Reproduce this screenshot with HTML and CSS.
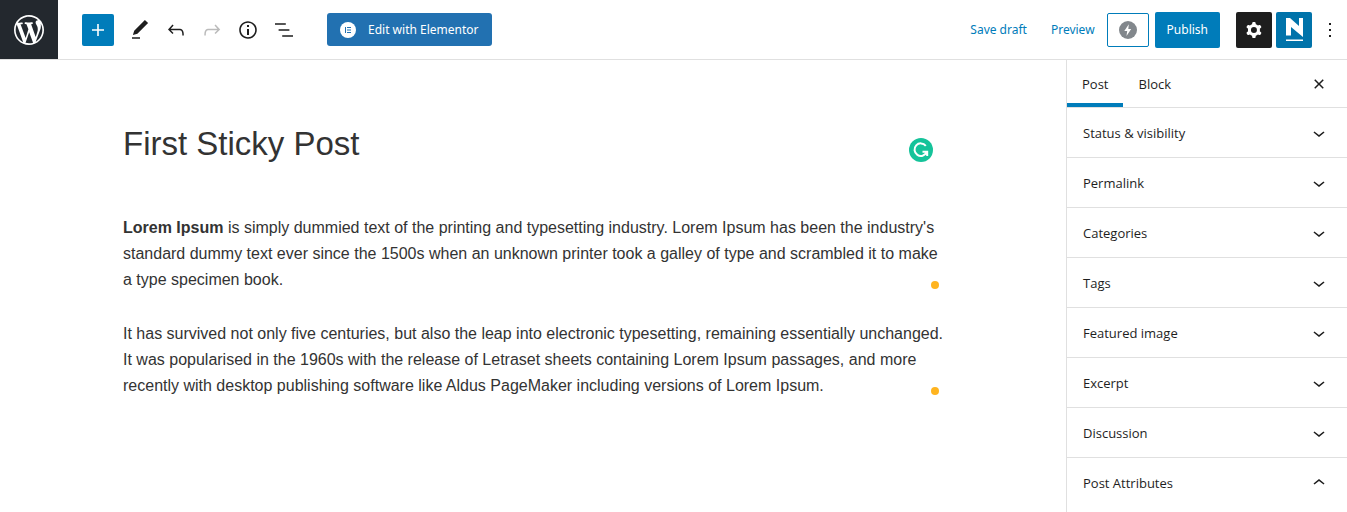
FILE: index.html
```html
<!DOCTYPE html>
<html lang="en">

<head>
    <meta charset="UTF-8">
    <meta name="viewport" content="width=device-width, initial-scale=1.0">
    <title>Edit Post</title>
    <link rel="stylesheet" href="styles.css">
</head>

<body>
    <div class="editor">
        <header class="header">
            <a class="logo" href="#" aria-label="View Posts">
                <svg viewBox="-2 -2 24 24" width="36" height="36"><path d="M20 10c0-5.51-4.49-10-10-10C4.48 0 0 4.49 0 10c0 5.52 4.48 10 10 10 5.51 0 10-4.48 10-10zM7.78 15.37L4.37 6.22c.55-.02 1.17-.08 1.17-.08.5-.06.44-1.13-.06-1.11 0 0-1.45.11-2.37.11-.18 0-.37 0-.58-.01C4.12 2.69 6.87 1.11 10 1.11c2.33 0 4.45.87 6.05 2.34-.68-.11-1.65.39-1.65 1.58 0 .74.45 1.36.9 2.1.35.61.55 1.36.55 2.46 0 1.49-1.4 5-1.4 5l-3.03-8.37c.54-.02.82-.17.82-.17.5-.05.44-1.25-.06-1.22 0 0-1.44.12-2.38.12-.87 0-2.33-.12-2.33-.12-.5-.03-.56 1.2-.06 1.22l.92.08 1.26 3.41zM17.41 10c.24-.64.74-1.87.43-4.25.7 1.29 1.05 2.71 1.05 4.25 0 3.29-1.73 6.24-4.4 7.78.97-2.59 1.94-5.2 2.92-7.78zM6.1 18.09C3.12 16.65 1.11 13.53 1.11 10c0-1.3.23-2.48.72-3.59C3.25 10.3 4.67 14.2 6.1 18.09zm4.03-6.63l2.58 6.98c-.86.29-1.76.45-2.71.45-.79 0-1.57-.11-2.29-.33.81-2.38 1.62-4.74 2.42-7.1z"/></svg>
            </a>
            <div class="tools">
                <button class="add" aria-label="Add block">
                    <svg viewBox="0 0 24 24" width="24" height="24"><path d="M18 11.2h-5.2V6h-1.6v5.2H6v1.6h5.2V18h1.6v-5.2H18z"/></svg>
                </button>
                <div class="tool-icons">
                    <button class="tool" aria-label="Tools">
                        <svg viewBox="0 0 24 24" width="24" height="24"><path d="M20.1 5.1L16.9 2 6.2 12.7l-1.3 4.4 4.5-1.3L20.1 5.1zM4 20.8h8v-1.5H4v1.5z"/></svg>
                    </button>
                    <button class="tool" aria-label="Undo">
                        <svg viewBox="0 0 24 24" width="24" height="24"><path d="M18.3 11.7c-.6-.6-1.4-.9-2.3-.9H6.7l2.9-3.3-1.1-1-4.5 5L8.5 16l1-1-2.7-2.7H16c.5 0 .9.2 1.3.5 1 1 1 3.4 1 4.5v.3h1.5v-.2c0-1.5 0-4.3-1.5-5.7z"/></svg>
                    </button>
                    <button class="tool" aria-label="Redo" disabled>
                        <svg viewBox="0 0 24 24" width="24" height="24"><path d="M15.6 6.5l-1.1 1 2.9 3.3H8c-.9 0-1.7.3-2.3.9-1.4 1.5-1.4 4.2-1.4 5.6v.2h1.5v-.3c0-1.1 0-3.5 1-4.5.3-.3.7-.5 1.3-.5h9.2L14.5 15l1.1 1.1 4.6-4.6-4.6-5z"/></svg>
                    </button>
                    <button class="tool" aria-label="Details">
                        <svg viewBox="0 0 24 24" width="24" height="24"><path d="M12 3.2c-4.8 0-8.8 3.9-8.8 8.8 0 4.8 3.9 8.8 8.8 8.8 4.8 0 8.8-3.9 8.8-8.8 0-4.8-4-8.8-8.8-8.8zm0 16c-4 0-7.2-3.3-7.2-7.2C4.8 8 8 4.8 12 4.8s7.2 3.3 7.2 7.2c0 4-3.2 7.2-7.2 7.2zM11 17h2v-6h-2v6zm0-8h2V7h-2v2z"/></svg>
                    </button>
                    <button class="tool" aria-label="List view">
                        <svg viewBox="0 0 24 24" width="24" height="24"><path d="M13.8 5.2H3v1.5h10.8V5.2zm-3.6 12v1.5H21v-1.5H10.2zm7.2-6H6.6v1.5h10.8v-1.5z"/></svg>
                    </button>
                </div>
                <button class="elementor">
                    <svg viewBox="0 0 16 16" width="16" height="16"><circle cx="8" cy="8" r="8"/><path class="mark" d="M5 5h1v6H5zM7 5h4v1H7zM7 7.500h4v1H7zM7 10h4v1H7z"/></svg>
                    Edit with Elementor
                </button>
            </div>
            <div class="actions">
                <button class="link">Save draft</button>
                <button class="link">Preview</button>
                <button class="amp" aria-label="AMP preview">
                    <svg viewBox="0 0 18 18" width="18" height="18"><circle cx="9" cy="9" r="9"/><path class="bolt" d="M9.800 3.200L5.300 10h2.900l-.7 5L12.200 8H9.300z"/></svg>
                </button>
                <button class="publish">Publish</button>
                <div class="plugins">
                    <button class="settings" aria-label="Settings">
                        <svg viewBox="0 0 24 24" width="24" height="24"><path fill-rule="evenodd" d="M10.289 4.836A1 1 0 0111.275 4h1.306a1 1 0 01.987.836l.244 1.466c.787.26 1.503.679 2.108 1.218l1.393-.522a1 1 0 011.216.437l.653 1.13a1 1 0 01-.23 1.273l-1.148.944a6.025 6.025 0 010 2.435l1.149.946a1 1 0 01.23 1.272l-.653 1.13a1 1 0 01-1.216.437l-1.394-.522c-.605.54-1.32.958-2.108 1.218l-.244 1.466a1 1 0 01-.987.836h-1.306a1 1 0 01-.986-.836l-.244-1.466a5.995 5.995 0 01-2.108-1.218l-1.394.522a1 1 0 01-1.217-.436l-.653-1.131a1 1 0 01.23-1.272l1.149-.946a6.026 6.026 0 010-2.435l-1.148-.944a1 1 0 01-.23-1.272l.653-1.131a1 1 0 011.217-.437l1.393.522a5.994 5.994 0 012.108-1.218l.244-1.466zM14.929 12a3 3 0 11-6 0 3 3 0 016 0z"/></svg>
                    </button>
                    <button class="neve" aria-label="Neve options">
                        <svg viewBox="0 0 18 24" width="18" height="24"><path d="M1 0h4l9 8V0h4v19L6 9v8.500H1zM1 21.500h17V23H1z"/></svg>
                    </button>
                </div>
                <button class="more" aria-label="Options">
                    <svg viewBox="0 0 24 24" width="24" height="24"><path d="M13 19h-2v-2h2v2zm0-6h-2v-2h2v2zm0-6h-2V5h2v2z"/></svg>
                </button>
            </div>
        </header>
        <div class="body">
            <main class="content">
                <div class="post">
                    <div class="title">
                        <h1>First Sticky Post</h1>
                        <svg class="grammarly" viewBox="0 0 24 24" width="24" height="24"><circle cx="12" cy="12" r="12"/><path d="M16.800 7.800A6.300 6.300 0 1 0 17.600 14.200M13.500 13.800H18.200V18"/></svg>
                    </div>
                    <div class="block">
                        <p><strong>Lorem Ipsum</strong> is simply dummied text of the printing and typesetting industry. Lorem Ipsum has been the industry's standard dummy text ever since the 1500s when an unknown printer took a galley of type and scrambled it to make a type specimen book.</p>
                        <span class="dot"></span>
                    </div>
                    <div class="block">
                        <p>It has survived not only five centuries, but also the leap into electronic typesetting, remaining essentially unchanged. It was popularised in the 1960s with the release of Letraset sheets containing Lorem Ipsum passages, and more recently with desktop publishing software like Aldus PageMaker including versions of Lorem Ipsum.</p>
                        <span class="dot"></span>
                    </div>
                </div>
            </main>
            <aside class="sidebar">
                <div class="tabs">
                    <button class="tab active">Post</button>
                    <button class="tab">Block</button>
                    <button class="close" aria-label="Close settings">
                        <svg viewBox="0 0 24 24" width="24" height="24"><path d="M12 13.06l3.712 3.713 1.061-1.06L13.061 12l3.712-3.712-1.06-1.06L12 10.938 8.288 7.227l-1.061 1.06L10.939 12l-3.712 3.712 1.06 1.061L12 13.061z"/></svg>
                    </button>
                </div>
                <button class="panel">Status &amp; visibility
                    <svg viewBox="0 0 24 24" width="24" height="24"><path d="M17.500 11.600L12 16l-5.500-4.400.9-1.200L12 14l4.500-3.600 1 1.200z"/></svg>
                </button>
                <button class="panel">Permalink
                    <svg viewBox="0 0 24 24" width="24" height="24"><path d="M17.500 11.600L12 16l-5.500-4.400.9-1.200L12 14l4.500-3.600 1 1.200z"/></svg>
                </button>
                <button class="panel">Categories
                    <svg viewBox="0 0 24 24" width="24" height="24"><path d="M17.500 11.600L12 16l-5.500-4.400.9-1.200L12 14l4.500-3.600 1 1.200z"/></svg>
                </button>
                <button class="panel">Tags
                    <svg viewBox="0 0 24 24" width="24" height="24"><path d="M17.500 11.600L12 16l-5.500-4.400.9-1.200L12 14l4.500-3.600 1 1.200z"/></svg>
                </button>
                <button class="panel">Featured image
                    <svg viewBox="0 0 24 24" width="24" height="24"><path d="M17.500 11.600L12 16l-5.500-4.400.9-1.200L12 14l4.500-3.600 1 1.200z"/></svg>
                </button>
                <button class="panel">Excerpt
                    <svg viewBox="0 0 24 24" width="24" height="24"><path d="M17.500 11.600L12 16l-5.500-4.400.9-1.200L12 14l4.500-3.600 1 1.200z"/></svg>
                </button>
                <button class="panel">Discussion
                    <svg viewBox="0 0 24 24" width="24" height="24"><path d="M17.500 11.600L12 16l-5.500-4.400.9-1.200L12 14l4.500-3.600 1 1.200z"/></svg>
                </button>
                <button class="panel open">Post Attributes
                    <svg viewBox="0 0 24 24" width="24" height="24"><path d="M6.500 12.400L12 8l5.500 4.400-.9 1.200L12 10l-4.500 3.600-1-1.200z"/></svg>
                </button>
            </aside>
        </div>
    </div>
</body>
</html>
```

FILE: styles.css
```css
* {
    box-sizing: border-box;
}

body {
    margin: 0;
    background-color: #fff;
    color: #1e1e1e;
    font-family: "Open Sans", "Noto Sans", sans-serif;
    font-size: 13px;
}

button {
    display: flex;
    align-items: center;
    justify-content: center;
    margin: 0;
    padding: 0;
    border: none;
    border-radius: 2px;
    background: none;
    color: inherit;
    font: inherit;
    white-space: nowrap;
    cursor: pointer;
}

svg {
    display: block;
    flex-shrink: 0;
    fill: currentColor;
}

.editor {
    display: flex;
    flex-direction: column;
    min-height: 100vh;
}

/* top bar */
.header {
    display: flex;
    align-items: stretch;
    height: 60px;
    border-bottom: 1px solid #e0e0e0;
    font-family: "Noto Sans", sans-serif;
    font-size: 12px;
}

.logo {
    display: flex;
    align-items: center;
    justify-content: center;
    width: 58px;
    margin-right: 24px;
    background-color: #23282e;
    color: #fff;
}

.tools,
.tool-icons,
.actions,
.plugins {
    display: flex;
    align-items: center;
}

.add {
    width: 32px;
    height: 32px;
    margin-right: 8px;
    background-color: #007cba;
    color: #fff;
}

.tool {
    width: 36px;
    height: 36px;
}

.tool:disabled {
    color: #bbb;
    cursor: default;
}

.elementor {
    gap: 12px;
    height: 33px;
    margin-left: 25px;
    padding: 0 13px;
    border-radius: 3px;
    background-color: #2271b1;
    color: #fff;
}

.elementor .mark {
    fill: #2271b1;
}

.actions {
    margin-left: auto;
    padding-right: 5px;
}

.link {
    height: 36px;
    padding: 0 12px;
    color: #007cba;
}

.amp {
    width: 42px;
    height: 34px;
    border: 1px solid #007cba;
    color: #82878c;
}

.amp .bolt {
    fill: #fff;
}

.publish {
    height: 36px;
    margin-left: 6px;
    padding: 0 12px;
    background-color: #007cba;
    color: #fff;
}

.plugins {
    gap: 4px;
    margin-left: 16px;
}

.settings,
.neve {
    width: 36px;
    height: 36px;
    background-color: #1e1e1e;
    color: #fff;
}

.neve {
    background-color: #0073aa;
}

.more {
    margin-left: 6px;
}

/* post */
.body {
    display: flex;
    flex: 1;
}

.content {
    flex: 1;
    padding: 61px 116px 0 123px;
    color: #333;
    font-family: "Liberation Sans", Arial, sans-serif;
    font-size: 16px;
    line-height: 26px;
}

.post {
    max-width: 826px;
}

.title {
    display: flex;
    align-items: center;
    justify-content: space-between;
    margin-bottom: 48px;
    padding-right: 16px;
}

h1 {
    margin: 0;
    font-size: 33px;
    font-weight: 400;
    line-height: 46px;
}

.grammarly {
    margin-top: 12px;
    fill: #15c39a;
}

.grammarly path {
    fill: none;
    stroke: #fff;
    stroke-width: 2;
}

.block {
    position: relative;
    margin-bottom: 28px;
}

p {
    margin: 0;
}

.dot {
    position: absolute;
    right: 10px;
    bottom: 4px;
    width: 8px;
    height: 8px;
    border-radius: 50%;
    background-color: #ffb41f;
}

/* settings sidebar */
.sidebar {
    flex: 0 0 281px;
    border-left: 1px solid #e0e0e0;
}

.tabs {
    display: flex;
    height: 48px;
    border-bottom: 1px solid #e0e0e0;
}

.tab {
    padding: 0 15px;
    border-radius: 0;
}

.tab.active {
    box-shadow: inset 0 -4px #007cba;
}

.close {
    margin-left: auto;
    padding-right: 16px;
}

.panel {
    justify-content: space-between;
    width: 100%;
    height: 50px;
    padding: 0 16px;
    border-bottom: 1px solid #e0e0e0;
    border-radius: 0;
}

.panel.open {
    border-bottom-color: transparent;
}
```
